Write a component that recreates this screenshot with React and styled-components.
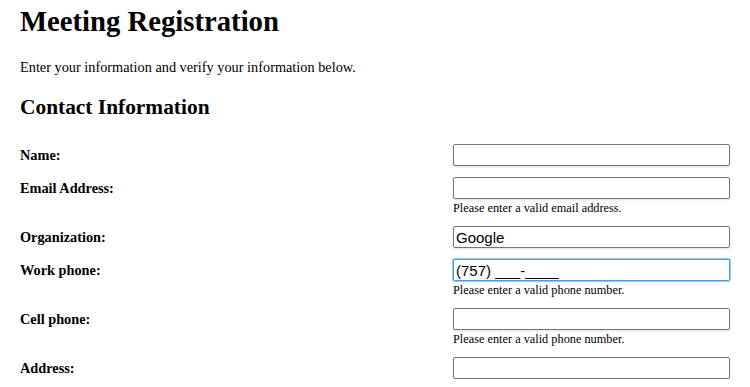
import React from 'react'
import styled, { createGlobalStyle } from 'styled-components'

const Global = createGlobalStyle`
  html, body {
    margin: 0;
    padding: 0;
    background: #fff;
  }
  body {
    font-family: "Liberation Serif", "Times New Roman", serif;
    color: #000;
  }
`

const Page = styled.div`
  padding: 0 20px;
`

const Title = styled.h1`
  font-size: 28.7px;
  font-weight: bold;
  margin: 5px 0 0;
  line-height: 33px;
`

const Intro = styled.p`
  font-size: 14.3px;
  margin: 21px 0 0;
  line-height: 17px;
`

const Section = styled.h2`
  font-size: 21.4px;
  font-weight: bold;
  margin: 19px 0 0;
  line-height: 25px;
`

const Form = styled.form`
  display: flex;
  flex-direction: column;
  gap: 11px;
  margin-top: 24px;
`

const Row = styled.div`
  display: grid;
  grid-template-columns: 1fr 277px;
  align-items: start;
`

const Label = styled.label`
  font-size: 14.3px;
  font-weight: bold;
  line-height: 22px;
`

const Field = styled.div`
  display: flex;
  flex-direction: column;
`

const Input = styled.input`
  box-sizing: border-box;
  width: 277px;
  height: 22px;
  margin: 0;
  padding: 0 2px;
  font-family: "Liberation Sans", Arial, sans-serif;
  font-size: 15px;
  color: #000;
  border: 1px solid ${p => (p.$focused ? '#4d9de6' : '#767676')};
  border-radius: 2px;
  box-shadow: ${p => (p.$focused ? '0 0 0 1px #9dc7f0' : '0 1px 2px rgba(0,0,0,0.12)')};
  outline: none;
`

const Hint = styled.div`
  font-size: 12.3px;
  line-height: 14px;
  margin-top: 2px;
`

const fields = [
  { label: 'Name:', value: '' },
  { label: 'Email Address:', value: '', hint: 'Please enter a valid email address.' },
  { label: 'Organization:', value: 'Google' },
  { label: 'Work phone:', value: '(757) ___-____', hint: 'Please enter a valid phone number.', focused: true },
  { label: 'Cell phone:', value: '', hint: 'Please enter a valid phone number.' },
  { label: 'Address:', value: '' },
]

const App = () => {
  return (
    <Page>
      <Global />
      <Title>Meeting Registration</Title>
      <Intro>Enter your information and verify your information below.</Intro>
      <Section>Contact Information</Section>
      <Form>
        {fields.map(f => (
          <Row key={f.label}>
            <Label>{f.label}</Label>
            <Field>
              <Input defaultValue={f.value} $focused={f.focused} readOnly />
              {f.hint && <Hint>{f.hint}</Hint>}
            </Field>
          </Row>
        ))}
      </Form>
    </Page>
  )
}

export default App
